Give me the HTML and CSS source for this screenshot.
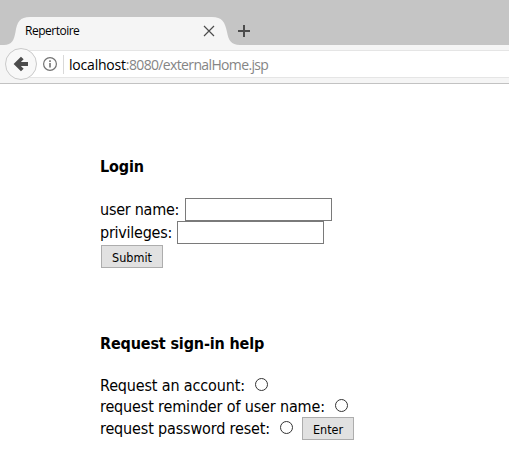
FILE: index.html
```
<!DOCTYPE html>
<html lang="en">
<head>
<meta charset="utf-8">
<title>Repertoire</title>
<link rel="stylesheet" href="styles.css">
</head>
<body>
<header class="tabs">
  <div class="tab">
    <svg class="tab-shape" width="246" height="28" viewBox="0 0 246 28"><path d="M0 28H4C12 28 14 23 15.5 15C17 5 20 0 30 0H212C222 0 225 5 227 15C228.500 23 231 28 240 28Z"/></svg>
    <span class="tab-title">Repertoire</span>
    <svg class="close" width="12" height="12" viewBox="0 0 12 12"><path d="M1 1L11 11M11 1L1 11"/></svg>
  </div>
  <svg class="plus" width="12" height="12" viewBox="0 0 12 12"><path d="M6 0V12M0 6H12"/></svg>
</header>
<nav class="toolbar">
  <div class="address">
    <svg class="back" width="32" height="32" viewBox="0 0 32 32"><circle cx="16" cy="16" r="15.5"/><path d="M23 16H12M17.3 10L11.3 16L17.3 22"/></svg>
    <svg class="info" width="14" height="14" viewBox="0 0 14 14"><circle cx="7" cy="7" r="6.4"/><path d="M7 6V10.5M7 3.3V4.9"/></svg>
    <span class="divider"></span>
    <span class="url"><b>localhost</b>:8080/externalHome.jsp</span>
  </div>
</nav>
<main>
  <form class="login">
    <h3>Login</h3>
    <label class="field"><span class="label user">user name:</span><input type="text"></label>
    <label class="field"><span class="label priv">privileges:</span><input type="text"></label>
    <button type="button" class="submit">Submit</button>
  </form>
  <form class="help">
    <h3>Request sign-in help</h3>
    <label class="option"><span class="label account">Request an account:</span><input type="radio" name="help"></label>
    <label class="option"><span class="label reminder">request reminder of user name:</span><input type="radio" name="help"></label>
    <div class="option last"><label class="option"><span class="label reset">request password reset:</span><input type="radio" name="help"></label><button type="button" class="enter">Enter</button></div>
  </form>
</main>
</body>
</html>
```
FILE: styles.css
```
* { box-sizing: border-box; }
body {
  margin: 0;
  height: 463px;
  overflow: hidden;
  background: #fff;
  color: #000;
  font: 16px/21px "DejaVu Sans Condensed", "DejaVu Sans", sans-serif;
  font-stretch: condensed;
  letter-spacing: -0.15px;
}
svg { display: block; flex: none; }
.tabs {
  display: flex;
  height: 45px;
  padding-top: 17px;
  background: #c5c5c5;
}
.tab {
  position: relative;
  display: flex;
  align-items: center;
  width: 238px;
  height: 28px;
  padding-left: 25px;
}
.tab-shape { position: absolute; left: 0; top: 0; fill: #f5f5f5; }
.tab-title {
  position: relative;
  width: 178px;
  font: 12px/16px "Open Sans", sans-serif;
  letter-spacing: -0.5px;
}
.close { position: relative; fill: none; stroke: #4c4c4c; stroke-width: 1.2; }
.plus { margin-top: 8px; fill: none; stroke: #4c4c4c; stroke-width: 2; }
.toolbar {
  height: 39px;
  padding: 5px 0 0 20px;
  background: #f5f5f5;
  border-bottom: 1px solid #c2c2c2;
}
.address {
  display: flex;
  align-items: center;
  height: 28px;
  background: #fff;
  border-top: 1px solid #e5e5e5;
  border-bottom: 1px solid #e5e5e5;
}
.back { margin: 0 0 0 -15px; }
.back circle { fill: #f8f8f8; stroke: #c9c9c9; }
.back path { fill: none; stroke: #4c4c4c; stroke-width: 3.8; }
.info { margin: 0 0 0 6px; fill: none; stroke: #737373; stroke-width: 1.2; }
.info path { stroke-width: 1.6; }
.divider { width: 1px; height: 19px; margin: 0 5px 0 6px; background: #d9d9d9; }
.url {
  padding-top: 2px;
  font: 14px/20px "Open Sans", sans-serif;
  letter-spacing: -0.64px;
  color: #858585;
  white-space: nowrap;
}
.url b { color: #000; font-weight: 400; letter-spacing: -0.2px; }
main { padding: 72px 0 0 100px; }
h3 {
  margin: 0 0 21px;
  font-size: 16px;
  line-height: 21px;
  font-weight: 700;
  letter-spacing: -0.15px;
  white-space: nowrap;
}
.field { display: flex; align-items: center; height: 23px; }
.label { flex: none; white-space: nowrap; }
.user { width: 85px; letter-spacing: -0.25px; }
.priv { width: 77px; letter-spacing: -0.25px; }
input[type="text"] {
  width: 147px;
  height: 23px;
  margin: 0;
  padding: 0;
  background: #fff;
  border: 1px solid #7a7a7a;
}
button {
  height: 23px;
  padding: 2px 0 0;
  background: #e1e1e1;
  border: 1px solid #adadad;
  border-radius: 0;
  color: #000;
  font: 12.5px/18px "DejaVu Sans Condensed", "DejaVu Sans", sans-serif;
  font-stretch: condensed;
}
.submit { display: block; width: 62px; margin: 1px 0 0 1px; }
.help { margin-top: 65px; }
.option { display: flex; align-items: center; height: 21px; }
.last { height: 23px; }
input[type="radio"] {
  appearance: none;
  width: 13px;
  height: 13px;
  margin: -2px 0 0;
  background: #fff;
  border: 1px solid #333;
  border-radius: 50%;
}
.account { width: 155px; }
.reminder { width: 235px; }
.reset { width: 180px; }
.enter { width: 52px; margin-left: 9px; }
```
